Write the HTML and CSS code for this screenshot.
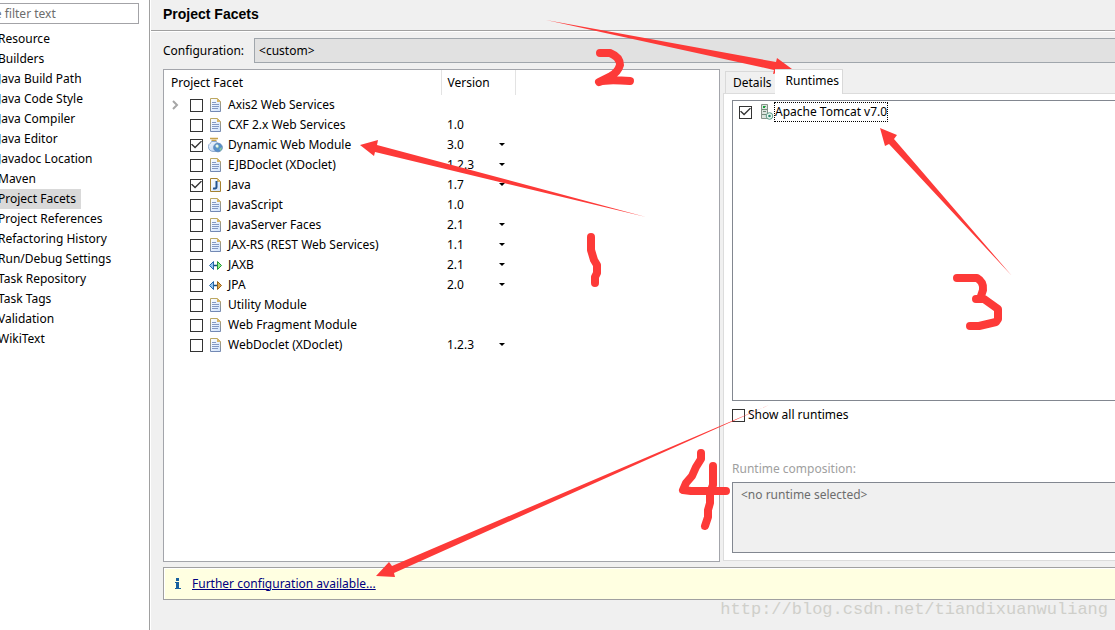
FILE: index.html
```html
<!DOCTYPE html>
<html lang="en">
<head>
<meta charset="utf-8">
<title>Project Facets</title>
<link rel="stylesheet" href="styles.css">
</head>
<body>
<svg class="symbols" aria-hidden="true">
  <defs>
    <linearGradient id="blue" x1="0" y1="0" x2="1" y2="1"><stop offset="0" stop-color="#f4faff"/><stop offset="1" stop-color="#b4cdee"/></linearGradient>
    <linearGradient id="page" x1="0" y1="0" x2="1" y2="1"><stop offset="0" stop-color="#fff"/><stop offset="1" stop-color="#cfe2fa"/></linearGradient>
    <linearGradient id="edge" x1="0" y1="0" x2="0" y2="1"><stop offset="0" stop-color="#bba762"/><stop offset="1" stop-color="#7389b4"/></linearGradient>
    <symbol id="doc" viewBox="0 0 16 16">
      <path d="M2.500 1.500h7l3 3v10h-10z" fill="url(#page)" stroke="url(#edge)"/>
      <path d="M9 1v4h4z" fill="#d8b769"/>
      <path d="M4 5.500h4M4 7.500h7M4 9.500h7M4 11.500h6" stroke="#8399c4"/>
    </symbol>
    <symbol id="java" viewBox="0 0 16 16">
      <path d="M2.500 1.500h7l3 3v10h-10z" fill="url(#page)" stroke="#a58230"/>
      <path d="M9 1v4h4z" fill="#d8b769"/>
      <path d="M8.500 4v6q0 2-3.500 1.500" fill="none" stroke="#24548f" stroke-width="2"/>
    </symbol>
    <symbol id="web" viewBox="0 0 16 16">
      <path d="M2 1.500h8M3.500 3.500h5" stroke="#c7a14a" stroke-width="1.500"/>
      <path d="M3.500 4.500h5c0 2 3 2 3 5s-2 5-5.500 5S.500 13 .500 9.500s3-3 3-5z" fill="url(#blue)" stroke="#8ba9cf"/>
      <circle cx="10" cy="10.500" r="4.300" fill="#5790cb" stroke="#5f88b8"/>
      <path d="M7.500 8.500q2-2 3 0t-1 3zM11 12l3-2-1 4z" fill="#8bc99a"/><circle cx="9" cy="9" r="1.500" fill="#fff" opacity=".8"/>
    </symbol>
    <symbol id="jaxb" viewBox="0 0 16 16">
      <path d="M5 8.500h6" stroke="#174d7c" stroke-width="1.500"/>
      <path d="M5.500 4.500v8l-4-4z" fill="#93c4ef" stroke="#2767aa"/><path d="M9.500 4.500v8l4-4z" fill="#8fef8c" stroke="#25943a"/>
    </symbol>
    <symbol id="jpa" viewBox="0 0 16 16">
      <path d="M5 8.500h6" stroke="#174d7c" stroke-width="1.500"/>
      <path d="M5.500 4.500v8l-4-4z" fill="#93c4ef" stroke="#2767aa"/><path d="M9.500 4.500v8l4-4z" fill="#dda550" stroke="#99631b"/>
    </symbol>
    <symbol id="server" viewBox="0 0 16 16">
      <path d="M2.500.500h6v14h-6z" fill="#dce4df" stroke="#87938a"/>
      <path d="M4 2.500h3M3 5.500h5M4 7.500h3M3 10.500h5" stroke="#738b7b"/><path d="M4 2h2v2H4z" fill="#12a637"/>
      <circle cx="10.500" cy="12" r="3.300" fill="#edf8f3" stroke="#5d9d86"/><circle cx="10.500" cy="12" r="1.300" fill="#27846a"/>
    </symbol>
  </defs>
</svg>

<div class="window">
  <nav class="sidebar" aria-label="Properties">
    <input class="filter" type="text" placeholder="type filter text" aria-label="Filter">
    <ul class="pages">
      <li><a href="#">Resource</a></li>
      <li><a href="#">Builders</a></li>
      <li><a href="#">Java Build Path</a></li>
      <li><a href="#">Java Code Style</a></li>
      <li><a href="#">Java Compiler</a></li>
      <li><a href="#">Java Editor</a></li>
      <li><a href="#">Javadoc Location</a></li>
      <li><a href="#">Maven</a></li>
      <li><a href="#" class="current" aria-current="page">Project Facets</a></li>
      <li><a href="#">Project References</a></li>
      <li><a href="#">Refactoring History</a></li>
      <li><a href="#">Run/Debug Settings</a></li>
      <li><a href="#">Task Repository</a></li>
      <li><a href="#">Task Tags</a></li>
      <li><a href="#">Validation</a></li>
      <li><a href="#">WikiText</a></li>
    </ul>
  </nav>

  <main class="main">
    <header class="title-bar"><h1>Project Facets</h1></header>
    <div class="content">
      <div class="config">
        <label for="configuration">Configuration:</label>
        <select id="configuration"><option>&lt;custom&gt;</option></select>
      </div>

      <div class="panels">
        <section class="facets">
          <table>
            <colgroup><col class="col-facet"><col class="col-version"><col></colgroup>
            <thead><tr><th>Project Facet</th><th>Version</th><th></th></tr></thead>
            <tbody>
              <tr><td><div class="facet"><svg class="twisty" viewBox="0 0 8 10"><path d="M2 1l4 4-4 4" fill="none" stroke="#a6a6a6" stroke-width="2"/></svg><input type="checkbox" id="f1"><svg class="icon"><use href="#doc"/></svg><label for="f1">Axis2 Web Services</label></div></td><td></td><td></td></tr>
              <tr><td><div class="facet"><span class="twisty"></span><input type="checkbox" id="f2"><svg class="icon"><use href="#doc"/></svg><label for="f2">CXF 2.x Web Services</label></div></td><td>1.0</td><td></td></tr>
              <tr><td><div class="facet"><span class="twisty"></span><input type="checkbox" id="f3" checked><svg class="icon"><use href="#web"/></svg><label for="f3">Dynamic Web Module</label></div></td><td><div class="version"><select aria-label="Dynamic Web Module version"><option>3.0</option></select></div></td><td></td></tr>
              <tr><td><div class="facet"><span class="twisty"></span><input type="checkbox" id="f4"><svg class="icon"><use href="#doc"/></svg><label for="f4">EJBDoclet (XDoclet)</label></div></td><td><div class="version"><select aria-label="EJBDoclet version"><option>1.2.3</option></select></div></td><td></td></tr>
              <tr><td><div class="facet"><span class="twisty"></span><input type="checkbox" id="f5" checked><svg class="icon"><use href="#java"/></svg><label for="f5">Java</label></div></td><td><div class="version"><select aria-label="Java version"><option>1.7</option></select></div></td><td></td></tr>
              <tr><td><div class="facet"><span class="twisty"></span><input type="checkbox" id="f6"><svg class="icon"><use href="#doc"/></svg><label for="f6">JavaScript</label></div></td><td>1.0</td><td></td></tr>
              <tr><td><div class="facet"><span class="twisty"></span><input type="checkbox" id="f7"><svg class="icon"><use href="#doc"/></svg><label for="f7">JavaServer Faces</label></div></td><td><div class="version"><select aria-label="JavaServer Faces version"><option>2.1</option></select></div></td><td></td></tr>
              <tr><td><div class="facet"><span class="twisty"></span><input type="checkbox" id="f8"><svg class="icon"><use href="#doc"/></svg><label for="f8">JAX-RS (REST Web Services)</label></div></td><td><div class="version"><select aria-label="JAX-RS version"><option>1.1</option></select></div></td><td></td></tr>
              <tr><td><div class="facet"><span class="twisty"></span><input type="checkbox" id="f9"><svg class="icon"><use href="#jaxb"/></svg><label for="f9">JAXB</label></div></td><td><div class="version"><select aria-label="JAXB version"><option>2.1</option></select></div></td><td></td></tr>
              <tr><td><div class="facet"><span class="twisty"></span><input type="checkbox" id="f10"><svg class="icon"><use href="#jpa"/></svg><label for="f10">JPA</label></div></td><td><div class="version"><select aria-label="JPA version"><option>2.0</option></select></div></td><td></td></tr>
              <tr><td><div class="facet"><span class="twisty"></span><input type="checkbox" id="f11"><svg class="icon"><use href="#doc"/></svg><label for="f11">Utility Module</label></div></td><td></td><td></td></tr>
              <tr><td><div class="facet"><span class="twisty"></span><input type="checkbox" id="f12"><svg class="icon"><use href="#doc"/></svg><label for="f12">Web Fragment Module</label></div></td><td></td><td></td></tr>
              <tr><td><div class="facet"><span class="twisty"></span><input type="checkbox" id="f13"><svg class="icon"><use href="#doc"/></svg><label for="f13">WebDoclet (XDoclet)</label></div></td><td><div class="version"><select aria-label="WebDoclet version"><option>1.2.3</option></select></div></td><td></td></tr>
            </tbody>
          </table>
        </section>

        <section class="side">
          <div class="tabs" role="tablist">
            <button class="tab" role="tab" type="button" aria-selected="false">Details</button>
            <button class="tab active" role="tab" type="button" aria-selected="true">Runtimes</button>
          </div>
          <div class="tab-body" role="tabpanel">
            <div class="runtimes">
              <div class="runtime"><input type="checkbox" id="tomcat" checked><svg class="icon"><use href="#server"/></svg><label class="focused" for="tomcat">Apache Tomcat v7.0</label></div>
            </div>
            <div class="show-all"><input type="checkbox" id="show-all"><label for="show-all">Show all runtimes</label></div>
            <p class="caption">Runtime composition:</p>
            <div class="composition">&lt;no runtime selected&gt;</div>
          </div>
        </section>
      </div>

      <div class="notice">
        <svg class="info" viewBox="0 0 8 12"><path d="M2 0h3v3H2zM1 4h4v6h2v1H1v-1h1V5H1z" fill="#17609f"/></svg>
        <a href="#">Further configuration available...</a>
      </div>
    </div>
    <footer class="watermark">http://blog.csdn.net/tiandixuanwuliang</footer>
  </main>
</div>

<svg class="marks" viewBox="0 0 1115 630" aria-hidden="true">
  <g fill="#fd3a38">
    <path d="M360 145L378 140 377 145 646 217 375 152 374 156z"/>
    <path d="M546 20L776 62 777 58 792 69 773 74 774 70z"/>
    <path d="M880 128L897 135 894 139 1012 276 889 144 885 146z"/>
    <path d="M376 576L389 562 392 566 769 405 394 573 395 577z"/>
  </g>
  <g fill="none" stroke="#fd3a38" stroke-width="8" stroke-linecap="round" stroke-linejoin="round">
    <path d="M591 237v13l3 10 3 5v8l-2 4v6"/>
    <path d="M600 53h10q10 4 10 12-2 7-9 11l-12 6q7-3 31-1"/>
    <path d="M957 278h20q7 4 6 12l-3 9h-4 8l14 10v10l-2 3-17 4h-9"/>
    <path d="M701 453v6l-5 8-4 9-6 7-3 7 8 1h35M713 466v19l-3 8v10l-2 7v7l-3 9"/>
  </g>
</svg>
</body>
</html>
```
FILE: styles.css
```css
* { box-sizing: border-box; }

body {
  margin: 0;
  font: 12px/20px "Noto Sans", "Open Sans", sans-serif;
  color: #000;
  background: #fff;
  overflow: hidden;
}

input, select, button { font: inherit; color: inherit; margin: 0; }

.symbols { position: absolute; width: 0; height: 0; }

.window { display: flex; min-height: 100vh; overflow: hidden; }

/* Page list */
.sidebar {
  flex: 0 0 150px;
  padding-top: 3px;
  border-right: 1px solid #a0a0a0;
  overflow: hidden;
}
.filter {
  display: block;
  width: 168px;
  height: 21px;
  margin-left: -29px;
  padding: 0 5px;
  border: 1px solid #a3a3a7;
  background: #fff;
}
.filter::placeholder { color: #6d6d6d; opacity: 1; }
.pages { list-style: none; margin: 5px 0 0 -5px; padding: 0; }
.pages a {
  display: inline-block;
  height: 20px;
  padding: 0 5px 0 3px;
  color: inherit;
  text-decoration: none;
  vertical-align: top;
}
.pages .current { background: #d9d9d9; }

/* Main area */
.main {
  flex: 1;
  min-width: 0;
  display: flex;
  flex-direction: column;
  margin-left: 1px;
  background: #f0f0f0;
}
.title-bar {
  padding: 4px 12px 6px;
  border-bottom: 1px solid #a0a0a0;
  box-shadow: 0 1px #fff;
}
h1 { margin: 0; font: bold 14px/20px "Liberation Sans", Arial, sans-serif; }

.content { flex: 1; display: flex; flex-direction: column; padding: 7px 0 0 12px; }

.config { display: flex; align-items: center; gap: 10px; }
.config select {
  appearance: none;
  flex: 1;
  height: 25px;
  padding: 0 4px;
  border: solid #a0a6ac;
  border-width: 1px 0 1px 1px;
  border-radius: 0;
  background: #e1e1e1;
}

.panels { flex: 1; display: flex; gap: 3px; margin-top: 6px; }

.facets { flex: 0 1 557px; border: 1px solid #a3a5ab; background: #fff; }
table { width: 100%; table-layout: fixed; border-collapse: collapse; }
.col-facet { width: 277px; }
.col-version { width: 74px; }
th, td { height: 20px; padding: 0 0 0 6px; text-align: left; font-weight: 400; }
th { height: 25px; border-right: 1px solid #e3e3e3; }
th:first-child { padding-left: 7px; }
th:last-child { border-right: 0; }
td:first-child { padding: 0; }

.facet { display: flex; align-items: center; height: 20px; padding-left: 7px; }
.twisty { width: 8px; height: 10px; margin-right: 11px; }
.icon { width: 16px; height: 16px; flex: none; }
.facet .icon { margin: 0 4px 0 5px; }

input[type="checkbox"] {
  appearance: none;
  flex: none;
  width: 13px;
  height: 13px;
  border: 1px solid #333;
  background: #fff;
  display: grid;
  place-items: center;
}
input[type="checkbox"]:checked::before {
  content: "";
  width: 11px;
  height: 9px;
  background: #333;
  clip-path: polygon(0 45%, 10% 35%, 37% 68%, 90% 2%, 100% 12%, 37% 90%);
}

.version { position: relative; height: 20px; }
.version select {
  appearance: none;
  display: block;
  width: 100%;
  height: 20px;
  padding: 0;
  border: 0;
  background: transparent;
}
.version::after {
  content: "";
  position: absolute;
  right: 10px;
  top: 8px;
  border: solid transparent;
  border-width: 3px 3px 0;
  border-top-color: #000;
}

/* Runtimes */
.side { flex: 1; min-width: 0; display: flex; flex-direction: column; padding-bottom: 1px; }
.tabs { display: flex; align-items: flex-end; height: 24px; padding-left: 2px; }
.tab {
  height: 22px;
  padding: 0 3px 0 7px;
  border: 1px solid #d9d9d9;
  border-bottom: 0;
  background: #f0f0f0;
  white-space: nowrap;
}
.tab.active {
  height: 25px;
  margin: 0 0 -1px -1px;
  padding: 0 3px 2px 11px;
  border-left: 0;
  background: #fff;
  z-index: 1;
}
.tab-body {
  flex: 1;
  display: flex;
  flex-direction: column;
  padding: 6px 0 7px 8px;
  border: solid #dcdcdc;
  border-width: 1px 0 1px 1px;
  background: #fff;
}
.runtimes {
  flex: 1;
  padding: 2px 0 0 6px;
  border: solid #828790;
  border-width: 1px 0 1px 1px;
}
.runtime { display: flex; align-items: center; }
.runtime .icon { margin-left: 7px; }
.focused { outline: 1px dotted #000; line-height: 18px; }
.show-all { display: flex; align-items: center; gap: 3px; margin-top: 4px; }
.caption { margin: 34px 0 3px; color: #a0a0a0; }
.composition {
  height: 71px;
  padding: 2px 8px;
  border: solid #828790;
  border-width: 1px 0 1px 1px;
  background: #f0f0f0;
  color: #6d6d6d;
}

.notice {
  display: flex;
  align-items: center;
  height: 33px;
  margin-top: 5px;
  padding-left: 10px;
  border: solid #a0a0a0;
  border-width: 1px 0 1px 1px;
  background: #ffffe1;
  box-shadow: inset 1px 1px #fff;
}
.info { width: 8px; height: 12px; margin-right: 10px; }
.notice a { color: #000080; }

.watermark {
  height: 30px;
  padding-right: 7px;
  text-align: right;
  font: 17px/20px "Liberation Mono", monospace;
  color: #cfcfca;
}

/* Hand-drawn annotations */
.marks { position: absolute; top: 0; left: 0; width: 1115px; height: 630px; pointer-events: none; }
```
